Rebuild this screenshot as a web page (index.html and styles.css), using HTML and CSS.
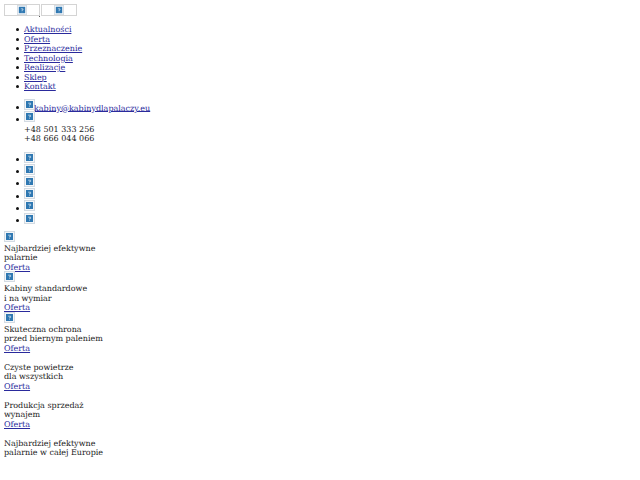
FILE: index.html
```html
<!DOCTYPE html>
<html lang="pl">

<head>
  <meta charset="UTF-8" />
  <title>Kabiny dla palaczy</title>
  <link rel="stylesheet" href="styles.css">
</head>

<body>
  <svg class="defs" width="0" height="0">
    <symbol id="broken" viewBox="0 0 11 11">
      <rect x="0.5" y="0.5" width="10" height="10" fill="#f4f6f8" stroke="#d3dbe3" />
      <rect x="2" y="2" width="7" height="7" fill="#2f78b2" />
      <path d="M4.2 4.2h2.4v1.4H5.5v.8M5.5 7.4v.6" fill="none" stroke="#cfe2f0" stroke-width="0.8" />
    </symbol>
  </svg>

  <div class="langs">
    <a class="lang" href="#"><svg class="icon"><use href="#broken" /></svg></a>
    <a class="lang" href="#"><svg class="icon"><use href="#broken" /></svg></a>
  </div>

  <ul class="menu">
    <li><a href="#">Aktualności</a></li>
    <li><a href="#">Oferta</a></li>
    <li><a href="#">Przeznaczenie</a></li>
    <li><a href="#">Technologia</a></li>
    <li><a href="#">Realizacje</a></li>
    <li><a href="#">Sklep</a></li>
    <li><a href="#">Kontakt</a></li>
  </ul>

  <ul class="contact">
    <li><svg class="icon"><use href="#broken" /></svg><a href="#">kabiny@kabinydlapalaczy.eu</a></li>
    <li><svg class="icon"><use href="#broken" /></svg><br />+48 501 333 256<br />+48 666 044 066</li>
  </ul>

  <ul class="social">
    <li><svg class="icon"><use href="#broken" /></svg></li>
    <li><svg class="icon"><use href="#broken" /></svg></li>
    <li><svg class="icon"><use href="#broken" /></svg></li>
    <li><svg class="icon"><use href="#broken" /></svg></li>
    <li><svg class="icon"><use href="#broken" /></svg></li>
    <li><svg class="icon"><use href="#broken" /></svg></li>
  </ul>

  <div class="slides">
    <div class="slide"><svg class="icon"><use href="#broken" /></svg><br />Najbardziej efektywne<br />palarnie<br /><a href="#">Oferta</a></div>
    <div class="slide"><svg class="icon"><use href="#broken" /></svg><br />Kabiny standardowe<br />i na wymiar<br /><a href="#">Oferta</a></div>
    <div class="slide"><svg class="icon"><use href="#broken" /></svg><br />Skuteczna ochrona<br />przed biernym paleniem<br /><a href="#">Oferta</a></div>
    <div class="slide"><br />Czyste powietrze<br />dla wszystkich<br /><a href="#">Oferta</a></div>
    <div class="slide"><br />Produkcja sprzedaż<br />wynajem<br /><a href="#">Oferta</a></div>
    <div class="slide"><br />Najbardziej efektywne<br />palarnie w całej Europie</div>
  </div>
</body>

</html>
```

FILE: styles.css
```css
body {
  margin: 4px;
  font-family: "DejaVu Serif", serif;
  font-size: 8px;
  line-height: 9.5px;
  color: #222;
  text-rendering: geometricPrecision;
}

a {
  color: #2a2a9c;
}

ul {
  margin: 9px 0;
  padding-left: 20px;
  list-style: none;
}

.social {
  margin: 8px 0 5.5px;
}

li {
  position: relative;
}

li::before {
  content: "";
  position: absolute;
  left: -8px;
  top: 3px;
  width: 3px;
  height: 3px;
  border-radius: 50%;
  background: #111;
}

.contact li::before,
.social li::before {
  top: 5px;
}

.defs {
  display: block;
}

.langs {
  display: flex;
  gap: 1px;
}

.lang {
  position: relative;
  width: 36px;
  height: 12px;
  border: 1px solid #d4d4d4;
  box-sizing: border-box;
  display: flex;
  justify-content: center;
  align-items: center;
}

.lang:first-child::after {
  content: "";
  position: absolute;
  right: -1px;
  bottom: -2px;
  width: 1px;
  height: 1px;
  background: #555;
}

.icon {
  width: 11px;
  height: 11px;
  margin-top: -1.3px;
}

.contact .icon {
  margin-right: -1px;
}

.slide .icon {
  margin-top: -1px;
  vertical-align: -0.5px;
}

.lang .icon {
  width: 10px;
  height: 10px;
  margin-top: 0;
}
```
